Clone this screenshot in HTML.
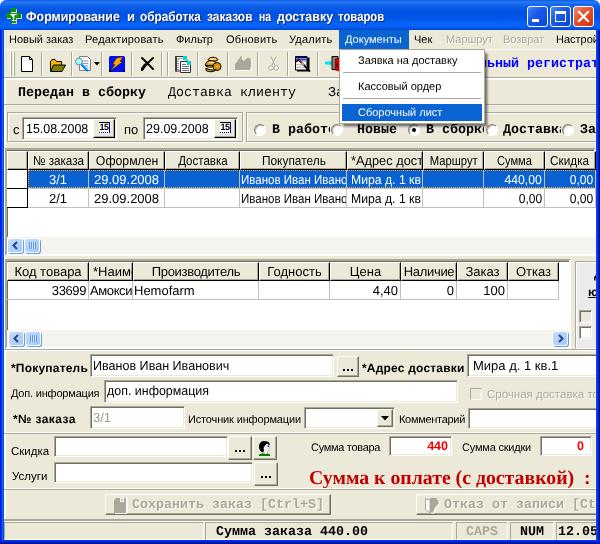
<!DOCTYPE html>
<html><head><meta charset="utf-8">
<style>
*{box-sizing:border-box;margin:0;padding:0}
html,body{width:600px;height:544px;overflow:hidden;background:#ece9d8}
body{font-family:"Liberation Sans",sans-serif;font-size:11px;color:#000;position:relative;-webkit-font-smoothing:antialiased;text-rendering:geometricPrecision}
.a{position:absolute;white-space:nowrap}
.t{position:absolute;white-space:nowrap;line-height:14px;font-size:11px}
.mono{font-family:"Liberation Mono",monospace;font-size:13.33px;line-height:16px}
.b{font-weight:bold}
.dis{color:#aca899;text-shadow:1px 1px 0 #fff}
.sunk{position:absolute;background:#fff;border:1px solid;border-color:#aca899 #fff #fff #aca899;box-shadow:inset 1px 1px 0 #716f64,inset -1px -1px 0 #ece9d8;overflow:hidden;white-space:nowrap}
.btn{position:absolute;background:#ece9d8;border:1px solid;border-color:#fff #716f64 #716f64 #fff;box-shadow:inset -1px -1px 0 #aca899}
.hd{position:absolute;background:#ece9d8;border:1px solid;border-color:#fff #000 #000 #fff;box-shadow:inset -1px -1px 0 #aca899;line-height:17px;text-align:center;overflow:hidden;white-space:nowrap;height:19px;top:0}
.cell{position:absolute;line-height:19px;overflow:hidden;white-space:nowrap;border-right:1px solid #c0c0c0;border-bottom:1px solid #c0c0c0;height:19px;font-size:13px}
.sep{position:absolute;top:52px;width:2px;height:24px;border-left:1px solid #aca899;border-right:1px solid #fff}
.hl{position:absolute;left:4px;width:592px;height:2px;border-top:1px solid #aca899;border-bottom:1px solid #fff}
.vscr{position:absolute;background:#f4f3ee}
.sbtn{position:absolute;width:16px;height:15px;border:1px solid #fff;border-radius:3px;background:linear-gradient(135deg,#c4dcfd,#a6c8f8);box-shadow:1px 1px 0 #5aa0f0}
.radio{position:absolute;width:12px;height:12px;border-radius:50%;background:#fff;border:1px solid;border-color:#808080 #fff #fff #808080;transform:rotate(0deg);box-shadow:inset 1px 1px 0 #b8b5a8}
.g2c .cell{line-height:19px;height:19px}
.nx{display:inline-block;transform-origin:50% 50%}
.nl{display:inline-block;transform-origin:0 50%}
.nr{display:inline-block;transform-origin:100% 50%}
.tw{top:8px;font-size:13.4px;line-height:18px;color:#fff;text-shadow:1px 1px 0 #0a246a;transform-origin:0 0}
</style></head><body><div id="w" style="position:absolute;left:0;top:0;width:600px;height:544px;will-change:transform;overflow:hidden;background:#ece9d8">

<!-- TITLE BAR -->
<div class="a" style="left:0;top:0;width:600px;height:30px;background:#fff"></div>
<div class="a" id="title" style="left:0;top:0;width:600px;height:30px;background:linear-gradient(to bottom,#0a5ce8 0%,#2a7af6 7%,#1c6cf0 13%,#0a5fe8 22%,#0052e2 40%,#0054e5 60%,#0864fa 80%,#0660f4 90%,#0044d4 100%);border-radius:6px 6px 0 0"></div>
<!-- app icon -->
<svg class="a" style="left:6px;top:8px" width="17" height="17" viewBox="0 0 17 17"><path d="M6 1h5v5h5v5h-5v5H6v-5H1V6h5z" fill="#d8d0b0"/><path d="M5 0h5v5h5v5h-5v5H5v-5H0V5h5z" fill="#0a960a"/><path d="M5 4h5v1H5zM4 6h7v1H9l-1 1v1h1v1H8v2h2v1H6v-1h1V9H6V8L5 7H4z" fill="#fff"/></svg>
<div class="t b tw" style="left:26px;transform:scaleX(0.925)">Формирование</div><div class="t b tw" style="left:127.3px;transform:scaleX(0.976)">и</div><div class="t b tw" style="left:140.2px;transform:scaleX(0.882)">обработка</div><div class="t b tw" style="left:206.8px;transform:scaleX(0.892)">заказов</div><div class="t b tw" style="left:259.2px;transform:scaleX(0.78)">на</div><div class="t b tw" style="left:276.7px;transform:scaleX(0.929)">доставку</div><div class="t b tw" style="left:337.8px;transform:scaleX(0.846)">товаров</div>
<!-- window buttons -->
<div class="a" style="left:527px;top:6px;width:21px;height:21px;border:1px solid #fff;border-radius:3px;background:linear-gradient(135deg,#4888f8 0%,#1a5ae8 40%,#0a44d4 100%)"><div class="a" style="left:4px;top:12px;width:7px;height:3px;background:#fff"></div></div>
<div class="a" style="left:550px;top:6px;width:21px;height:21px;border:1px solid #fff;border-radius:3px;background:linear-gradient(135deg,#4888f8 0%,#1a5ae8 40%,#0a44d4 100%)"><div class="a" style="left:4px;top:4px;width:11px;height:11px;border:1px solid #fff;border-top:3px solid #fff"></div></div>
<div class="a" style="left:573px;top:6px;width:21px;height:21px;border:1px solid #fff;border-radius:3px;background:linear-gradient(135deg,#f08a6a 0%,#e8502c 45%,#d22e0c 100%)"><svg class="a" style="left:0;top:0" width="19" height="19" viewBox="0 0 19 19"><path d="M5 5l9 9M14 5l-9 9" stroke="#fff" stroke-width="2.2" stroke-linecap="square"/></svg></div>

<!-- MENU BAR -->
<div class="a" style="left:339px;top:30px;width:70px;height:19px;background:#0a64d0"></div>
<div class="t" style="left:9px;top:33px">Новый заказ</div>
<div class="t" style="left:85px;top:33px;letter-spacing:.2px">Редактировать</div>
<div class="t" style="left:176px;top:33px">Фильтр</div>
<div class="t" style="left:226px;top:33px;letter-spacing:.2px">Обновить</div>
<div class="t" style="left:289px;top:33px;letter-spacing:.2px">Удалить</div>
<div class="t" style="left:345px;top:33px;color:#fff">Документы</div>
<div class="t" style="left:414px;top:33px">Чек</div>
<div class="t dis" style="left:446px;top:33px">Маршрут</div>
<div class="t dis" style="left:503px;top:33px">Возврат</div>
<div class="t" style="left:556px;top:33px;width:40px;overflow:hidden">Настройки</div>
<div class="a" style="left:4px;top:49px;width:592px;height:1px;background:#fff"></div>

<!-- TOOLBAR -->
<div class="a" style="left:10px;top:52px;width:2px;height:24px;border-left:1px solid #fff;border-right:1px solid #aca899"></div>
<div class="a" style="left:13px;top:52px;width:2px;height:24px;border-left:1px solid #fff;border-right:1px solid #aca899"></div>
<div class="sep" style="left:41px"></div>
<div class="sep" style="left:71px"></div>
<div class="sep" style="left:101px"></div>
<div class="sep" style="left:131px"></div>
<div class="sep" style="left:161px"></div>
<div class="sep" style="left:167px"></div>
<div class="sep" style="left:197px"></div>
<div class="sep" style="left:227px"></div>
<div class="sep" style="left:257px"></div>
<div class="sep" style="left:287px"></div>
<div class="sep" style="left:317px"></div>
<!-- new doc -->
<svg class="a" style="left:21px;top:56px" width="12" height="16" viewBox="0 0 12 16"><path d="M0.5 0.5h8l3 3v12h-11z" fill="#fff" stroke="#000"/><path d="M8.5 0.5v3h3" fill="none" stroke="#000"/></svg>
<!-- folder -->
<svg class="a" style="left:49px;top:59px" width="17" height="13" viewBox="0 0 17 13"><path d="M1.5 12V2.5l1.5-2h3l1.5 2h5V6" fill="#ffb400" stroke="#000"/><path d="M1.5 12.5l3-6.5h12l-3.5 6.5z" fill="#808000" stroke="#000"/></svg>
<!-- magnifier doc -->
<svg class="a" style="left:75px;top:55px" width="26" height="18" viewBox="0 0 26 18"><path d="M4.5 1.5h8l3 3v11h-11z" fill="#f4f4f4" stroke="#808080"/><path d="M7 6h6M7 8.5h6M7 11h6" stroke="#a0a0a0"/><circle cx="4" cy="6.5" r="3.4" fill="#9ff" stroke="#7a8a9a"/><path d="M6.5 9.5l6.5 6.5" stroke="#0060ff" stroke-width="2.4"/><path d="M6.8 9.2l6.5 6.5" stroke="#0ff" stroke-width=".8"/><path d="M19 7h6l-3 3.4z" fill="#000"/></svg>
<!-- lightning -->
<svg class="a" style="left:109px;top:56px" width="16" height="16" viewBox="0 0 16 16"><rect x="0" y="0" width="16" height="16" rx="1.5" fill="#0010f0"/><path d="M7.500 2L14 .8 11 5.500h3L1.500 14.800 6 8.500H3.500z" fill="#ffa400" stroke="#2a1a00" stroke-width=".5"/><path d="M13.500 16h2.500v-2.500zM0 13v3h3z" fill="#000"/></svg>
<!-- X -->
<svg class="a" style="left:141px;top:57px" width="13" height="14" viewBox="0 0 13 14"><path d="M1 1C3.500 3 8.500 8.500 12 12M12 1C8.500 4 4 8.500 1 12.500" stroke="#000" stroke-width="2" fill="none" stroke-linecap="round"/><path d="M4 8L1 12.500" stroke="#000" stroke-width="3" stroke-linecap="round"/><circle cx="6.300" cy="6.500" r="1.800" fill="#000"/></svg>
<!-- copy docs -->
<svg class="a" style="left:175px;top:56px" width="17" height="17" viewBox="0 0 17 17"><path d="M.5.500h8l3.500 3.500v11H.5z" fill="#fff" stroke="#303030"/><path d="M0 0h2v15.500H0z" fill="#404040"/><path d="M2 3.500h2M2 5.500h2M2 7.500h2M2 9.500h2M2 11.500h2M2 13.500h2" stroke="#909090"/><path d="M3 2.500h5" stroke="#a0a0a0"/><path d="M8 0h4v4H8z" fill="#00d8d8"/><path d="M5.500 5.500h7l3 3v8h-10z" fill="#fff" stroke="#303030"/><path d="M12 5h4v4h-4z" fill="#00d8d8"/><path d="M7 8.500h4M7 10.500h7M7 12.500h7M7 14.500h7" stroke="#707070"/></svg>
<!-- coins -->
<svg class="a" style="left:204px;top:56px" width="18" height="17" viewBox="0 0 18 17"><path d="M4 3.500C6 .5 12 .5 14 3.500 12 6 6 6 4 3.500z" fill="#f0a000" stroke="#000"/><path d="M6 3h6" stroke="#fff8c0" stroke-width="1.200"/><path d="M2 7c1-2 4-2.500 7-2 3 .5 4 2 3 4-1 2-5 2.500-8 2S1 9 2 7z" fill="#f0a000" stroke="#000"/><path d="M5 6.500h5" stroke="#fff" stroke-width="1.200"/><path d="M1.500 9.500h9" stroke="#000" stroke-width="1.200"/><ellipse cx="13" cy="10.500" rx="4" ry="4" fill="#f0a000" stroke="#000"/><circle cx="13.200" cy="10.500" r="1.600" fill="#ffd040" stroke="#8a5000" stroke-width=".6"/><path d="M2 12c2 2 7 2.500 10 1.500-1 2.500-7 3-10 1z" fill="#e09000" stroke="#000"/><path d="M4 10.500h4" stroke="#808000" stroke-width="1.500"/></svg>
<!-- disabled gray icon -->
<svg class="a" style="left:235px;top:56px" width="18" height="16" viewBox="0 0 18 16"><g transform="translate(1,1)" fill="#fff"><path d="M0 14V8l2-2 1.500-3L5 2l.5-2h1l.5 3 1.500 2 1.500-1 2-2h3l1 2v7l-1 3z"/></g><path d="M0 14V8l2-2 1.500-3L5 2l.5-2h1l.5 3 1.500 2 1.500-1 2-2h3l1 2v7l-1 3z" fill="#aca899"/></svg>
<!-- scissors disabled -->
<svg class="a" style="left:268px;top:56px" width="12" height="17" viewBox="0 0 12 17"><g fill="none" stroke="#fff" transform="translate(1,1)"><path d="M3 0.5l4 9M8 0.5l-4 9"/><circle cx="3" cy="12" r="2.3"/><circle cx="8.2" cy="12" r="2.3"/></g><g fill="none" stroke="#aca899"><path d="M3 0.5l4 9M8 0.5l-4 9"/><circle cx="3" cy="12" r="2.3"/><circle cx="8.2" cy="12" r="2.3"/></g></svg>
<!-- notebook -->
<svg class="a" style="left:295px;top:56px" width="16" height="16" viewBox="0 0 16 16"><path d="M2 1.500h12.500V15.500H2z" fill="#000"/><path d="M.5.500h11.500v13.500H.5z" fill="#f4f4f8" stroke="#000"/><path d="M1 1h10.500v1.500H1z" fill="#000080"/><path d="M1 3h10.500v1.500H1z" fill="#2848ff"/><path d="M1 5.500h10M1 8.500h10M1 11.500h10" stroke="#c0c0d0"/><path d="M2 10h4v2H2z" fill="#d0d0d8"/><path d="M3.500 3.500L15 15.500" stroke="#000" stroke-width="1.800"/><path d="M3 3l3.500 3.600" stroke="#e01010" stroke-width="1.200"/><path d="M6.500 6.600l2.500 2.600" stroke="#e8d020" stroke-width="1.200"/><path d="M1 6l3-3" stroke="#000" stroke-width="1.200"/></svg>
<!-- exit -->
<svg class="a" style="left:324px;top:55px" width="18" height="18" viewBox="0 0 18 18"><path d="M1 6.500h4.500V5l3 3-3 3V9.500H1z" fill="#00e8f8"/><path d="M8 1.500h6v13H8z" fill="#8a8a8a" stroke="#000"/><path d="M11 4l6-1.500v14L11 15z" fill="#d00000" stroke="#600" stroke-width=".6"/><path d="M12.500 8.500h1.500v3h-1.500z" fill="#400"/></svg>

<div class="hl" style="top:77px;height:3px;border-bottom:2px solid #fff"></div>
<div class="a" id="wl" style="left:4px;top:78px;width:2px;height:441px;background:#fff"></div>
<!-- toolbar right text -->
<div class="t mono b" style="left:439px;top:57px;color:#0000ff;width:157px;overflow:hidden">Фискальный регистратор</div>

<!-- STATUS TABS ROW -->
<div class="t mono b" style="left:18px;top:86px">Передан в сборку</div>
<div class="t mono" style="left:168px;top:86px">Доставка клиенту</div>
<div class="t mono" style="left:328px;top:86px">Завершен</div>
<div class="hl" style="top:104px;border-bottom-color:#f4f2e8"></div>

<!-- DATE PANEL -->
<div class="a" style="left:7px;top:112px;width:236px;height:30px;border:1px solid #aca899;box-shadow:inset 1px 1px 0 #fff,1px 1px 0 #fff"></div>
<div class="a" style="left:246px;top:112px;width:354px;height:30px;border:1px solid #aca899;box-shadow:inset 1px 1px 0 #fff,1px 1px 0 #fff"></div>
<div class="t" style="left:13px;top:122px;font-size:13px;line-height:16px">с</div>
<div class="sunk" style="left:22px;top:117px;width:95px;height:23px"></div>
<div class="t" style="left:25.500px;top:121px;font-size:13px;line-height:16px;transform-origin:0 0;transform:scaleX(.956)">15.08.2008</div>
<div class="btn" style="left:93px;top:119px;width:22px;height:19px;border-color:#fff #000 #000 #fff"></div>
<div class="a b" style="left:99px;top:122px;width:11px;height:11px;border-top:1px solid #000;border-right:1px solid #0000c8;border-bottom:1px dotted #0000c8;background:#fff;color:#000;font-size:9px;line-height:9px;text-align:center;letter-spacing:-.6px;font-family:'Liberation Sans',sans-serif">15</div>
<div class="t" style="left:124px;top:122px;font-size:13px;line-height:16px">по</div>
<div class="sunk" style="left:143px;top:117px;width:95px;height:23px"></div>
<div class="t" style="left:145.500px;top:121px;font-size:13px;line-height:16px;transform-origin:0 0;transform:scaleX(.962)">29.09.2008</div>
<div class="btn" style="left:214px;top:119px;width:22px;height:19px;border-color:#fff #000 #000 #fff"></div>
<div class="a b" style="left:220px;top:122px;width:11px;height:11px;border-top:1px solid #000;border-right:1px solid #0000c8;border-bottom:1px dotted #0000c8;background:#fff;color:#000;font-size:9px;line-height:9px;text-align:center;letter-spacing:-.6px;font-family:'Liberation Sans',sans-serif">15</div>

<!-- RADIOS -->
<div class="t mono b" style="left:272px;top:123px;width:58px;overflow:hidden">В работе</div>
<div class="t mono b" style="left:357px;top:123px">Новые</div>
<div class="t mono b" style="left:426px;top:123px;width:58px;overflow:hidden">В сборке</div>
<div class="t mono b" style="left:503px;top:123px;width:58px;overflow:hidden">Доставка</div>
<div class="t mono b" style="left:580px;top:123px;width:16px;overflow:hidden">Зав</div>
<div class="radio" style="left:254px;top:124px"></div>
<div class="radio" style="left:331px;top:124px"></div>
<div class="radio" style="left:408px;top:124px"><div class="a" style="left:3px;top:3px;width:4px;height:4px;border-radius:50%;background:#000"></div></div>
<div class="radio" style="left:486px;top:124px"></div>
<div class="radio" style="left:562px;top:124px"></div>

<!-- GRID 1 -->
<div class="a" id="g1" style="left:5px;top:148px;width:591px;height:108px;background:#fff;border:2px solid;border-color:#aca899 #fff #fff #aca899;box-shadow:inset 1px 1px 0 #716f64"></div>
<div class="a" style="left:7px;top:151px;width:589px;height:57px;overflow:hidden;font-size:13px">
 <div class="hd" style="left:0;width:21px"></div>
 <div class="hd" style="left:21px;width:61px"><span class="nx" style="transform:scaleX(0.895)">№ заказа</span></div>
 <div class="hd" style="left:82px;width:76px"><span class="nx" style="transform:scaleX(0.944)">Оформлен</span></div>
 <div class="hd" style="left:158px;width:75px"><span class="nx" style="transform:scaleX(0.887)">Доставка</span></div>
 <div class="hd" style="left:233px;width:107px"><span class="nx" style="transform:scaleX(0.916)">Покупатель</span></div>
 <div class="hd" style="left:340px;width:76px;text-align:left;padding-left:3px"><span class="nl" style="transform:scaleX(.985)">*Адрес доставки</span></div>
 <div class="hd" style="left:416px;width:61px"><span class="nx" style="transform:scaleX(0.866)">Маршрут</span></div>
 <div class="hd" style="left:477px;width:61px"><span class="nx" style="transform:scaleX(0.856)">Сумма</span></div>
 <div class="hd" style="left:538px;width:51px;padding-right:1px"><span class="nx" style="transform:scaleX(0.905)">Скидка</span></div>
 <!-- row 1 selected -->
 <div class="a" style="left:21px;top:19px;width:568px;height:19px;background:#0a62d2"></div>
 <div class="cell" style="left:0;top:19px;width:21px;background:#fff;border-color:#000"></div>
 <div class="cell" style="left:21px;top:19px;width:61px;text-align:center;color:#fff">3/1</div>
 <div class="cell" style="left:82px;top:19px;width:76px;padding-left:5px;color:#fff">29.09.2008</div>
 <div class="cell" style="left:158px;top:19px;width:75px"></div>
 <div class="cell" style="left:233px;top:19px;width:107px;padding-left:1px;color:#fff"><span class="nl" style="transform:scaleX(.886)">Иванов Иван Иванович</span></div>
 <div class="cell" style="left:340px;top:19px;width:76px;padding-left:4px;color:#fff"><span class="nl" style="transform:scaleX(.94)">Мира д. 1 кв.1</span></div>
 <div class="cell" style="left:416px;top:19px;width:61px"></div>
 <div class="cell" style="left:477px;top:19px;width:61px;text-align:right;padding-right:2px;color:#fff"><span class="nr" style="transform:scaleX(.937)">440,00</span></div>
 <div class="cell" style="left:538px;top:19px;width:51px;text-align:right;padding-right:2px;color:#fff"><span class="nr" style="transform:scaleX(.93)">0,00</span></div>
 <div class="a" style="left:21px;top:19px;width:568px;height:18px;border:1px dotted #f0b040;border-right:none"></div>
 <!-- row 2 -->
 <div class="cell" style="left:0;top:38px;width:21px;background:#fff;border-color:#000"></div>
 <div class="cell" style="left:21px;top:38px;width:61px;text-align:center">2/1</div>
 <div class="cell" style="left:82px;top:38px;width:76px;padding-left:5px">29.09.2008</div>
 <div class="cell" style="left:158px;top:38px;width:75px"></div>
 <div class="cell" style="left:233px;top:38px;width:107px;padding-left:1px"><span class="nl" style="transform:scaleX(.886)">Иванов Иван Иванович</span></div>
 <div class="cell" style="left:340px;top:38px;width:76px;padding-left:4px"><span class="nl" style="transform:scaleX(.94)">Мира д. 1 кв.1</span></div>
 <div class="cell" style="left:416px;top:38px;width:61px"></div>
 <div class="cell" style="left:477px;top:38px;width:61px;text-align:right;padding-right:2px"><span class="nr" style="transform:scaleX(.93)">0,00</span></div>
 <div class="cell" style="left:538px;top:38px;width:51px;text-align:right;padding-right:2px"><span class="nr" style="transform:scaleX(.93)">0,00</span></div>
</div>
<!-- grid1 hscroll -->
<div class="vscr" style="left:7px;top:237px;width:589px;height:17px"></div>
<div class="sbtn" style="left:7px;top:238px"><svg class="a" style="left:3px;top:2px" width="8" height="9" viewBox="0 0 8 9"><path d="M6 1L2.5 4.5 6 8" stroke="#1f4a85" stroke-width="2" fill="none"/></svg></div>
<div class="sbtn" style="left:24px;top:238px"><div class="a" style="left:4px;top:3px;width:7px;height:7px;background:repeating-linear-gradient(to right,#5a96e8 0 1px,#d8e8ff 1px 2px)"></div></div>
<!-- GRID 2 -->
<div class="a" id="g2" style="left:5px;top:259px;width:566px;height:90px;background:#fff;border:2px solid;border-color:#aca899 #fff #fff #aca899;box-shadow:inset 1px 1px 0 #716f64"></div>
<div class="a g2c" style="left:7px;top:262px;width:562px;height:40px;overflow:hidden;font-size:13px">
 <div class="hd" style="left:0;width:82px">Код товара</div>
 <div class="hd" style="left:82px;width:44px;text-align:left;padding-left:3px">*Наименование</div>
 <div class="hd" style="left:126px;width:126px;letter-spacing:-.3px">Производитель</div>
 <div class="hd" style="left:252px;width:71px">Годность</div>
 <div class="hd" style="left:323px;width:71px">Цена</div>
 <div class="hd" style="left:394px;width:56px;letter-spacing:-.3px">Наличие</div>
 <div class="hd" style="left:450px;width:51px">Заказ</div>
 <div class="hd" style="left:501px;width:51px">Отказ</div>
 <div class="cell" style="left:0;top:19px;width:82px;text-align:right;padding-right:2px;letter-spacing:-.4px">33699</div>
 <div class="cell" style="left:82px;top:19px;width:44px;padding-left:1px;letter-spacing:-.4px">Амоксициллин</div>
 <div class="cell" style="left:126px;top:19px;width:126px;padding-left:1px">Hemofarm</div>
 <div class="cell" style="left:252px;top:19px;width:71px"></div>
 <div class="cell" style="left:323px;top:19px;width:71px;text-align:right;padding-right:2px">4,40</div>
 <div class="cell" style="left:394px;top:19px;width:56px;text-align:right;padding-right:2px">0</div>
 <div class="cell" style="left:450px;top:19px;width:51px;text-align:right;padding-right:2px">100</div>
 <div class="cell" style="left:501px;top:19px;width:51px"></div>
</div>
<div class="vscr" style="left:7px;top:330px;width:562px;height:17px"></div>
<div class="sbtn" style="left:8px;top:331px"><svg class="a" style="left:3px;top:2px" width="8" height="9" viewBox="0 0 8 9"><path d="M6 1L2.5 4.5 6 8" stroke="#1f4a85" stroke-width="2" fill="none"/></svg></div>
<div class="sbtn" style="left:25px;top:331px"><div class="a" style="left:4px;top:3px;width:7px;height:7px;background:repeating-linear-gradient(to right,#5a96e8 0 1px,#d8e8ff 1px 2px)"></div></div>
<div class="sbtn" style="left:552px;top:331px"><svg class="a" style="left:4px;top:2px" width="8" height="9" viewBox="0 0 8 9"><path d="M2 1l3.5 3.5L2 8" stroke="#1f4a85" stroke-width="2" fill="none"/></svg></div>
<!-- right side panel beside grid 2 -->
<div class="a" id="rp" style="left:575px;top:261px;width:25px;height:88px;background:#ebebeb;border:1px solid;border-color:#aca899 #fff #fff #aca899;box-shadow:inset 1px 1px 0 #fff"></div>
<div class="t b" style="left:594px;top:267px;font-size:12px;text-decoration:underline">Д</div>
<div class="t b" style="left:588px;top:285px;font-size:12px;text-decoration:underline">ю</div>
<div class="a" style="left:579px;top:310px;width:13px;height:13px;background:#ece9d8;border:1px solid;border-color:#aca899 #fff #fff #aca899;box-shadow:inset 1px 1px 0 #716f64,inset -1px -1px 0 #ece9d8"></div>
<div class="a" style="left:579px;top:326px;width:13px;height:13px;background:#fff;border:1px solid;border-color:#aca899 #fff #fff #aca899;box-shadow:inset 1px 1px 0 #716f64,inset -1px -1px 0 #ece9d8"></div>

<!-- FORM -->
<div class="hl" style="top:349px;border-bottom:1px solid #fff"></div>
<div class="t b" style="left:11px;top:361px;font-size:12px;letter-spacing:.2px">*Покупатель</div>
<div class="sunk" style="left:90px;top:354px;width:244px;height:23px"></div>
<div class="t" style="left:93px;top:358px;font-size:13px;line-height:16px;transform-origin:0 0;transform:scaleX(.966)">Иванов Иван Иванович</div>
<div class="btn" style="left:337px;top:356px;width:22px;height:21px"></div>
<div class="a" style="left:343px;top:369px;width:10px;height:2px;background:linear-gradient(to right,#000 0 2px,transparent 2px 4px,#000 4px 6px,transparent 6px 8px,#000 8px 10px)"></div>
<div class="t b" style="left:362px;top:361px;font-size:12px;letter-spacing:.2px;width:106px;overflow:hidden">*Адрес доставки</div>
<div class="sunk" style="left:467px;top:354px;width:133px;height:23px"></div>
<div class="t" style="left:473px;top:358px;font-size:13px;line-height:16px">Мира д. 1 кв.1</div>

<div class="t" style="left:11px;top:387px;letter-spacing:-.2px">Доп. информация</div>
<div class="sunk" style="left:104px;top:380px;width:354px;height:23px"></div>
<div class="t" style="left:107px;top:383px;font-size:13px;line-height:16px;transform-origin:0 0;transform:scaleX(.957)">доп. информация</div>
<div class="a" style="left:470px;top:388px;width:12px;height:12px;background:#ece9d8;border:1px solid;border-color:#aca899 #fff #fff #aca899"></div>
<div class="t dis" style="left:487px;top:388px;width:109px;overflow:hidden;font-size:11.5px">Срочная доставка товара</div>

<div class="t b" style="left:13px;top:412px;font-size:12px;letter-spacing:.4px">*№ заказа</div>
<div class="sunk" style="left:90px;top:406px;width:95px;height:23px"></div>
<div class="t" style="left:93px;top:410px;font-size:13px;line-height:16px;color:#9c998a">3/1</div>
<div class="t" style="left:188px;top:413px;letter-spacing:-.15px">Источник информации</div>
<div class="sunk" style="left:304px;top:407px;width:91px;height:22px"></div>
<div class="btn" style="left:377px;top:409px;width:16px;height:18px"></div>
<svg class="a" style="left:381px;top:416px" width="8" height="5" viewBox="0 0 8 5"><path d="M0 0h8l-4 4.5z" fill="#000"/></svg>
<div class="t" style="left:399px;top:413px;letter-spacing:-.3px">Комментарий</div>
<div class="sunk" style="left:468px;top:408px;width:132px;height:21px"></div>

<div class="hl" style="top:432px;border-top-color:#fff;border-bottom-color:#aca899"></div>
<div class="t" style="left:11px;top:445px;font-size:11.5px">Скидка</div>
<div class="sunk" style="left:54px;top:436px;width:174px;height:21px"></div>
<div class="btn" style="left:228px;top:436px;width:24px;height:24px"></div>
<div class="a" style="left:235px;top:450px;width:10px;height:2px;background:linear-gradient(to right,#000 0 2px,transparent 2px 4px,#000 4px 6px,transparent 6px 8px,#000 8px 10px)"></div>
<div class="btn" style="left:253px;top:436px;width:24px;height:24px"></div>
<svg class="a" style="left:258px;top:440px" width="13" height="17" viewBox="0 0 13 17"><path d="M1 16v-1.500l3-1h6l2 1V16z" fill="#008000"/><path d="M5 8l1-4 3-1 2.500 2v3l-1 3-1.500 1 .5 2H6.500l-.5-2z" fill="#f4f4f4" stroke="#888" stroke-width=".4"/><path d="M6 1C3 1 1 3.500 1 7c0 2.500 1.500 5 4 5.500l1-2L5.500 8 7 5.500l2-2L11 5l1-.5C11.500 2 9 1 6 1z" fill="#000"/><path d="M9.500 5.500h1.500v1.500H9.500z" fill="#0020ff"/></svg>
<div class="t" style="left:311px;top:441px;letter-spacing:-.3px">Сумма товара</div>
<div class="sunk" style="left:389px;top:436px;width:63px;height:20px"></div>
<div class="t b" style="left:389px;top:439px;width:59px;text-align:right;color:#f40000;font-size:12.5px">440</div>
<div class="t" style="left:462px;top:441px;letter-spacing:-.2px">Сумма скидки</div>
<div class="sunk" style="left:540px;top:436px;width:52px;height:20px"></div>
<div class="t b" style="left:540px;top:439px;width:44px;text-align:right;color:#f40000;font-size:12.5px">0</div>

<div class="t" style="left:12px;top:470px;font-size:11.5px">Услуги</div>
<div class="sunk" style="left:54px;top:462px;width:199px;height:21px"></div>
<div class="btn" style="left:254px;top:462px;width:24px;height:24px"></div>
<div class="a" style="left:261px;top:476px;width:10px;height:2px;background:linear-gradient(to right,#000 0 2px,transparent 2px 4px,#000 4px 6px,transparent 6px 8px,#000 8px 10px)"></div>
<div class="t b" style="left:309px;top:466px;font-family:'Liberation Serif',serif;font-size:19.8px;line-height:24px;color:#c00000;width:287px;overflow:hidden">Сумма к оплате (с доставкой)&nbsp; :</div>

<div class="hl" style="top:488px;border-top-color:#fff;border-bottom-color:#aca899"></div>
<div class="btn" style="left:105px;top:494px;width:226px;height:21px"></div>
<svg class="a" style="left:114px;top:498px" width="15" height="16" viewBox="0 0 15 16"><path d="M1 3h12v13H1z" fill="#fff"/><path d="M0 2l2-2h10v15H0z" fill="#aca899"/><path d="M6 0h4v4H6z" fill="#fff"/><path d="M7 1h1.500v2H7z" fill="#aca899"/><path d="M12 0h1.500v15H12z" fill="#fff"/></svg>
<div class="t mono b dis" style="left:132px;top:498px">Сохранить заказ [Ctrl+S]</div>
<div class="btn" style="left:416px;top:494px;width:190px;height:21px"></div>
<svg class="a" style="left:425px;top:498px" width="16" height="16" viewBox="0 0 16 16"><path d="M5 0h6l2.500 2.500V6L10 9.500 8 14.500H5z" fill="#fff" transform="translate(1,1)"/><path d="M5 0h6l2.500 2.500V6L10 9.500 8 14.500H5z" fill="#aca899"/><path d="M.5.500L5 2v12.500L.5 12z" fill="#fff" stroke="#aca899"/></svg>
<div class="t mono b dis" style="left:444px;top:498px;width:152px;overflow:hidden">Отказ от записи [Ctrl+Z]</div>

<!-- STATUS BAR -->
<div class="a" style="left:4px;top:519px;width:592px;height:2px;background:#aca899"></div>
<div class="a" style="left:4px;top:521px;width:592px;height:1px;background:#fff"></div>
<div class="a sb" style="left:4px;top:522px;width:200px;height:18px;border:1px solid;border-color:#aca899 #fff #fff #aca899"></div>
<div class="a sb" style="left:205px;top:522px;width:248px;height:18px;border:1px solid;border-color:#aca899 #fff #fff #aca899"></div>
<div class="a sb" style="left:456px;top:522px;width:52px;height:18px;border:1px solid;border-color:#aca899 #fff #fff #aca899"></div>
<div class="a sb" style="left:510px;top:522px;width:44px;height:18px;border:1px solid;border-color:#aca899 #fff #fff #aca899"></div>
<div class="a sb" style="left:556px;top:522px;width:44px;height:18px;border:1px solid;border-color:#aca899 #fff #fff #aca899"></div>
<div class="t mono b" style="left:216px;top:525px">Сумма заказа 440.00</div>
<div class="t mono b" style="left:466px;top:525px;color:#aca899">CAPS</div>
<div class="t mono b" style="left:520px;top:525px">NUM</div>
<div class="t mono b" style="left:558px;top:525px;width:38px;overflow:hidden">12.05.2009</div>

<!-- window borders -->
<div class="a" style="left:0;top:30px;width:4px;height:514px;background:linear-gradient(to right,#0014d8 0 1px,#0034e8 1px 2px,#0868f8 2px 3px,#0050e8 3px 4px)"></div>
<div class="a" style="left:596px;top:30px;width:4px;height:514px;background:linear-gradient(to right,#0848f0 0 1px,#0038e8 1px 2px,#0020c8 2px 3px,#001098 3px 4px)"></div>
<div class="a" style="left:0;top:540px;width:600px;height:4px;background:linear-gradient(to bottom,#0030f0 0 1px,#0028e0 1px 2px,#0018b8 2px 3px,#001090 3px 4px)"></div>
<!-- DROPDOWN MENU -->

<div class="a" style="left:339px;top:49px;width:146px;height:75px;background:#fff;border:1px solid #aca899;box-shadow:3px 3px 2px -1px rgba(0,0,0,.42),4px 4px 2px -1px rgba(0,0,0,.18)"></div>
<div class="t" style="left:358px;top:54px">Заявка на доставку</div>
<div class="a" style="left:343px;top:72px;width:138px;height:1px;background:#aca899"></div>
<div class="t" style="left:358px;top:80px">Кассовый ордер</div>
<div class="a" style="left:343px;top:98px;width:138px;height:1px;background:#aca899"></div>
<div class="a" style="left:342px;top:104px;width:140px;height:17px;background:#0a64d4"></div>
<div class="t" style="left:358px;top:106px;color:#fff">Сборочный лист</div>

</div></body></html>
